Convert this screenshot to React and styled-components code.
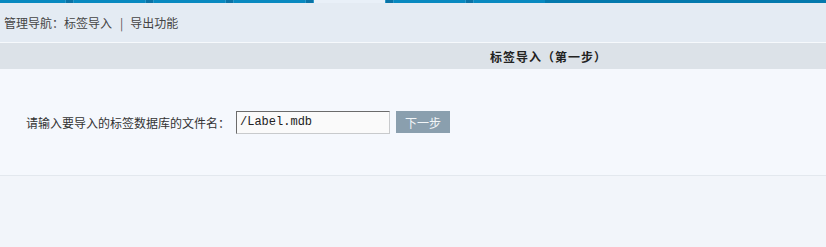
import React from "react"
import styled, { createGlobalStyle, css } from "styled-components"

const GlobalStyle = createGlobalStyle`
  html, body {
    margin: 0;
    padding: 0;
    background: #f2f5fa;
  }
  body {
    font-family: "Noto Sans CJK SC", "Liberation Sans", sans-serif;
    font-size: 12px;
    color: #333;
  }
`

const Page = styled.div`
  width: 826px;
  min-height: 247px;
  background: #f2f5fa;
  overflow: hidden;
`

const TabStrip = styled.div`
  display: flex;
  height: 3px;
  background: #0479ad;
`

const Tab = styled.div`
  width: ${({ first }) => (first ? "65px" : "71px")};
  flex-shrink: 0;
  background: ${({ active }) => (active ? "#e9f0f8" : "#0889c0")};
`

const TabGap = styled.div`
  width: 9px;
  flex-shrink: 0;
  background: #0a73a6;
  box-shadow: inset 1px 0 0 #2a98c8, inset -1px 0 0 #2a98c8;
`

const NavBar = styled.div`
  display: flex;
  align-items: center;
  height: 39px;
  padding-left: 4px;
  background: #e4ebf3;
  border-bottom: 1px solid #f6f9fc;
  color: #444;
  line-height: 12px;
`

const NavLink = styled.a`
  color: #444;
  text-decoration: none;
`

const NavSep = styled.span`
  margin: 0 7px 0 8px;
  color: #555;
`

const Panel = styled.div`
  display: flex;
  flex-direction: column;
`

const PanelHeader = styled.div`
  display: flex;
  align-items: center;
  height: 26px;
  padding-left: 490px;
  background: #dce2e8;
  font-weight: bold;
  color: #222;
  letter-spacing: 1px;
`

const PanelBody = styled.div`
  display: flex;
  align-items: center;
  height: 106px;
  padding-left: 26px;
  background: #f5f8fd;
  border-bottom: 1px solid #e3e8ee;
`

const Label = styled.label`
  color: #333;
  margin-right: 6px;
`

const fieldBox = css`
  box-sizing: border-box;
  height: 23px;
  margin: 0;
`

const FileInput = styled.input`
  ${fieldBox}
  width: 154px;
  padding: 0 3px;
  border: 1px solid #c8cacc;
  border-top-color: #6b6b6b;
  border-left-color: #6b6b6b;
  background: #fafafa;
  font-family: "Liberation Mono", monospace;
  font-size: 12px;
  color: #222;
  outline: none;
`

const NextButton = styled.button`
  ${fieldBox}
  width: 54px;
  height: 22px;
  margin-left: 6px;
  border: none;
  background: #8a9fae;
  color: #f2f6f8;
  font-family: "Noto Sans CJK SC", sans-serif;
  font-size: 12px;
  cursor: pointer;
`

const tabs = [false, false, false, false, true, false, false]

const App = () => (
  <>
    <GlobalStyle />
    <Page>
      <TabStrip>
        {tabs.map((active, i) => (
          <React.Fragment key={i}>
            {i > 0 && <TabGap />}
            <Tab active={active} first={i === 0} />
          </React.Fragment>
        ))}
      </TabStrip>
      <NavBar>
        管理导航：<NavLink href="#">标签导入</NavLink>
        <NavSep>|</NavSep>
        <NavLink href="#">导出功能</NavLink>
      </NavBar>
      <Panel>
        <PanelHeader>标签导入（第一步）</PanelHeader>
        <PanelBody>
          <Label htmlFor="dbfile">请输入要导入的标签数据库的文件名：</Label>
          <FileInput id="dbfile" defaultValue="/Label.mdb" />
          <NextButton type="button">下一步</NextButton>
        </PanelBody>
      </Panel>
    </Page>
  </>
)

export default App
